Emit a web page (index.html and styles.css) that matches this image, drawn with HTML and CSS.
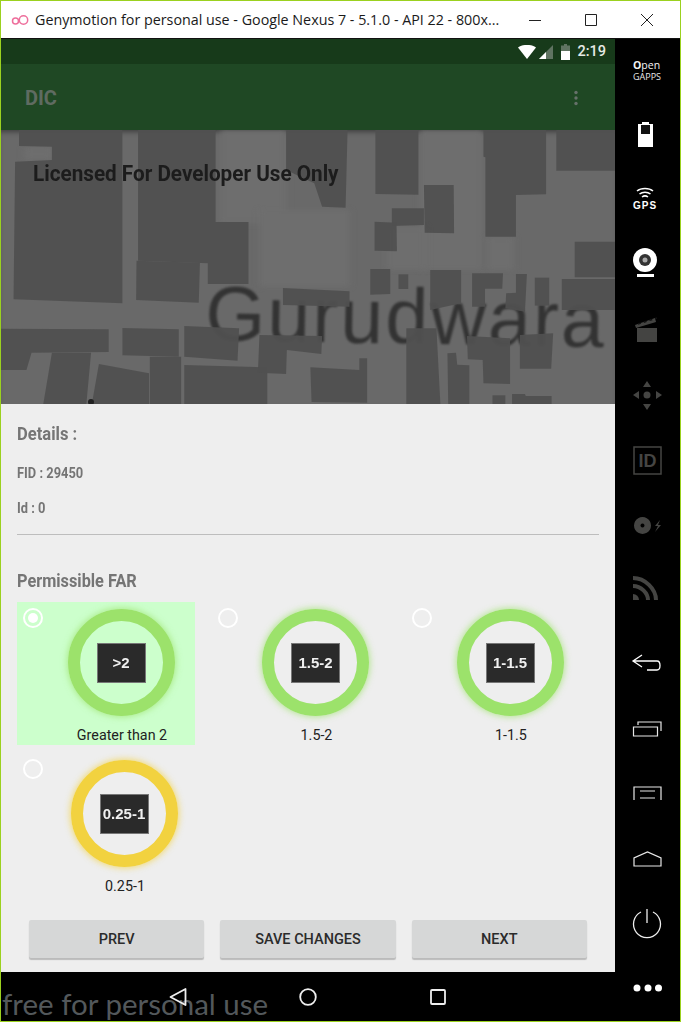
FILE: index.html
```html
<!DOCTYPE html>
<html lang="en">
<head>
  <meta charset="UTF-8">
  <title>Genymotion</title>
  <link rel="stylesheet" href="styles.css">
</head>
<body>
  <div class="window">
    <header class="titlebar">
      <svg class="app-logo" width="18" height="12" viewBox="0 0 18 12"><circle cx="4.5" cy="7" r="3" fill="none" stroke="#ee6f9c" stroke-width="1.5"/><circle cx="12.5" cy="6" r="4.2" fill="none" stroke="#ee6f9c" stroke-width="1.5"/></svg>
      <span class="title">Genymotion for personal use - Google Nexus 7 - 5.1.0 - API 22 - 800x...</span>
      <div class="win-controls">
        <svg width="14" height="14" viewBox="0 0 14 14"><path d="M1 7.5h12" stroke="#222" fill="none"/></svg>
        <svg width="14" height="14" viewBox="0 0 14 14"><path d="M1.5 1.5h11v11h-11z" stroke="#222" fill="none"/></svg>
        <svg width="14" height="14" viewBox="0 0 14 14"><path d="M1 1l12 12M13 1L1 13" stroke="#222" fill="none"/></svg>
      </div>
    </header>

    <div class="device">
      <main class="screen">
        <div class="statusbar">
          <svg width="18" height="14" viewBox="0 0 18 14"><path d="M0 2.5C5 -1 13 -1 18 2.5L9 14z" fill="#fff"/></svg>
          <svg width="14" height="14" viewBox="0 0 14 14"><path d="M14 0v14H0z" fill="#5f7361"/><path d="M7 7v7H0z" fill="#fff"/></svg>
          <svg class="status-batt" width="9" height="16" viewBox="0 0 9 16"><path d="M3 0h3v1.500h3V16H0V1.500h3z" fill="#5f7361"/><path d="M0 7h9v9H0z" fill="#fff"/></svg>
          <span class="clock">2:19</span>
        </div>
        <div class="toolbar">
          <span class="app-name">DIC</span>
          <svg width="6" height="16" viewBox="0 0 6 16"><circle cx="3" cy="2.500" r="1.700" fill="#66716a"/><circle cx="3" cy="8" r="1.700" fill="#66716a"/><circle cx="3" cy="13.500" r="1.700" fill="#66716a"/></svg>
        </div>

        <section class="map">
          <svg class="map-art" viewBox="0 0 614 274">
            <g class="map-light" transform="scale(0.3916 0.3333)">
              <rect x="560" y="0" width="170" height="280"/>
              <rect x="1070" y="0" width="160" height="420"/>
              <rect x="660" y="240" width="230" height="230"/>
              <rect x="60" y="50" width="70" height="40"/>
              <rect x="985" y="290" width="100" height="130"/>
              <rect x="1240" y="320" width="70" height="100"/>
            </g>
            <text class="map-label" x="204" y="210" transform="rotate(1 204 210)">Gurudwara</text>
            <g class="map-blocks" transform="scale(0.3916 0.3333)">
              <polygon points="46,0 310,0 310,520 32,508 36,95 130,90 130,50 46,48"/>
              <polygon points="350,0 548,0 548,276 632,276 632,462 528,462 528,400 350,392"/>
              <polygon points="346,392 508,398 505,518 345,510"/>
              <polygon points="728,0 885,0 880,233 820,230 800,160 728,120"/>
              <polygon points="956,0 1066,0 1066,194 956,192"/>
              <polygon points="1080,165 1156,165 1157,310 1082,308"/>
              <polygon points="998,235 1080,235 1080,285 998,288"/>
              <polygon points="954,275 1010,278 1011,364 954,362"/>
              <polygon points="1232,0 1392,0 1392,193 1315,195 1315,320 1237,320 1237,82 1232,80"/>
              <polygon points="1418,0 1568,0 1568,122 1418,122"/>
              <polygon points="1465,335 1568,335 1568,442 1465,442"/>
              <polygon points="1432,447 1568,447 1568,540 1432,540"/>
              <polygon points="943,417 994,417 994,492 943,494"/>
              <polygon points="1015,433 1040,433 1040,477 1015,477"/>
              <polygon points="1096,420 1175,420 1175,520 1096,540"/>
              <polygon points="1203,430 1282,430 1280,476 1236,476 1236,530 1203,530"/>
              <polygon points="1315,432 1343,432 1338,545 1288,535 1290,490 1315,488"/>
              <polygon points="1363,443 1400,443 1400,527 1363,527"/>
              <polygon points="720,474 890,484 890,530 720,525"/>
              <polygon points="0,596 275,598 275,666 78,668 65,720 0,720"/>
              <polygon points="130,668 230,668 218,822 108,822"/>
              <polygon points="310,594 454,598 454,680 310,676"/>
              <polygon points="468,588 608,595 604,692 468,680"/>
              <polygon points="380,680 460,680 460,822 380,822"/>
              <polygon points="250,702 378,730 378,822 232,822"/>
              <polygon points="468,705 680,712 680,822 468,822"/>
              <polygon points="660,615 820,618 818,672 730,660 728,732 656,728"/>
              <polygon points="790,712 915,720 915,685 935,685 935,818 793,816"/>
              <polygon points="1035,595 1112,595 1122,822 1035,822"/>
              <polygon points="1140,670 1162,668 1165,704 1196,706 1196,822 1142,822"/>
              <polygon points="1190,618 1300,625 1300,762 1232,760 1230,690 1192,688"/>
              <polygon points="1325,615 1410,610 1405,716 1325,716"/>
              <polygon points="1255,796 1288,796 1288,822 1255,822"/>
              <polygon points="1305,792 1338,792 1340,798 1406,798 1406,822 1305,822"/>
            </g>
            <circle cx="90" cy="272" r="3" fill="#222"/>
          </svg>
          <span class="license narrow">Licensed For Developer Use Only</span>
        </section>

        <section class="form">
          <h2 class="details-title"><span class="narrow">Details :</span></h2>
          <p class="detail"><span class="narrow">FID : 29450</span></p>
          <p class="detail"><span class="narrow">Id : 0</span></p>
          <hr class="divider">
          <h2 class="far-title"><span class="narrow">Permissible FAR</span></h2>

          <div class="options">
            <div class="option selected">
              <span class="radio checked"></span>
              <div class="option-body">
                <div class="ring green"><span class="badge">&gt;2</span></div>
                <span class="option-label">Greater than 2</span>
              </div>
            </div>
            <div class="option">
              <span class="radio"></span>
              <div class="option-body">
                <div class="ring green"><span class="badge">1.5-2</span></div>
                <span class="option-label">1.5-2</span>
              </div>
            </div>
            <div class="option">
              <span class="radio"></span>
              <div class="option-body">
                <div class="ring green"><span class="badge">1-1.5</span></div>
                <span class="option-label">1-1.5</span>
              </div>
            </div>
            <div class="option">
              <span class="radio"></span>
              <div class="option-body shifted">
                <div class="ring yellow"><span class="badge">0.25-1</span></div>
                <span class="option-label">0.25-1</span>
              </div>
            </div>
          </div>

          <div class="actions">
            <button class="btn" type="button">PREV</button>
            <button class="btn" type="button">SAVE CHANGES</button>
            <button class="btn" type="button">NEXT</button>
          </div>
        </section>

        <nav class="navbar">
          <span class="watermark">free for personal use</span>
          <div class="nav-key"><svg width="20" height="20" viewBox="0 0 20 20"><path d="M17.500 2v16L2.500 10z" fill="none" stroke="#eee" stroke-width="1.800" stroke-linejoin="round"/></svg></div>
          <div class="nav-key"><svg width="20" height="20" viewBox="0 0 20 20"><circle cx="10" cy="10" r="7.800" fill="none" stroke="#eee" stroke-width="1.800"/></svg></div>
          <div class="nav-key"><svg width="20" height="20" viewBox="0 0 20 20"><rect x="3" y="3" width="14" height="14" rx="1" fill="none" stroke="#eee" stroke-width="1.800"/></svg></div>
        </nav>
      </main>

      <aside class="sidebar">
        <svg class="side-art" viewBox="615 39 65 982" width="65" height="982">
          <text class="gapps-open" x="633" y="69"><tspan class="gapps-o">O</tspan>pen</text>
          <text class="gapps" x="633" y="79.500">GAPPS</text>

          <path d="M642 122h7v2h4v23h-15v-23h4z" fill="#fff"/>
          <rect x="641" y="125" width="9" height="9" fill="#111"/>

          <g fill="none" stroke="#fff" stroke-width="1.500">
            <path d="M637 191c4-3.500 12-3.500 16 0"/>
            <path d="M639.500 194c3-2.500 8-2.500 11 0"/>
            <path d="M642 197c2-1.500 4-1.500 6 0"/>
          </g>
          <text class="gps" x="645" y="208.500">GPS</text>

          <circle cx="645" cy="260" r="12" fill="#fff"/>
          <circle cx="645" cy="260" r="6" fill="#333"/>
          <circle cx="645" cy="260" r="2.500" fill="#aaa"/>
          <rect x="637" y="274" width="17" height="3" fill="#fff"/>

          <g fill="#444442">
            <rect x="637" y="328" width="20" height="14"/>
            <path d="M635 325l20-7 1 4-20 6z"/>
          </g>
          <path d="M638 324l19-6" stroke="#111" stroke-width="1.500" stroke-dasharray="3 3" fill="none"/>

          <g fill="#454543">
            <path d="M647 381l4 6h-8z"/>
            <path d="M647 410l4-6h-8z"/>
            <path d="M633 395l6-4v8z"/>
            <path d="M662 395l-6-4v8z"/>
            <circle cx="647" cy="395" r="3.500"/>
          </g>

          <rect x="634" y="447" width="27" height="27" fill="none" stroke="#454543" stroke-width="1.500"/>
          <text class="id-mark" x="647.500" y="467">ID</text>

          <path fill-rule="evenodd" fill="#454543" d="M642.500 517a8.500 8.500 0 1 0 .01 0zM642.500 523.500a2 2 0 1 1-.01 0z"/>
          <path d="M660 520l-5 6h3l-3 6 6-7h-3z" fill="#454543"/>

          <g fill="none" stroke="#454543" stroke-width="4">
            <path d="M633 578c12 0 23 11 23 22"/>
            <path d="M633 586c8 0 15 7 15 14"/>
          </g>
          <path d="M633 594a6 6 0 0 1 6 6h-6z" fill="#454543"/>

          <path d="M642 655l-9 6 9 6M633 661h24c4 0 4 9 0 9h-10" fill="none" stroke="#fff" stroke-width="1.300"/>

          <path d="M633.500 727h24v9h-24zM638 725v-3h23v9" fill="none" stroke="#e8e8e8" stroke-width="1.200"/>

          <path d="M634 800v-13h27v13M640 791h15M640 798h15" fill="none" stroke="#e8e8e8" stroke-width="1.200"/>

          <path d="M634 866v-8l13.500-6 13.500 6v8z" fill="none" stroke="#e8e8e8" stroke-width="1.200"/>

          <path d="M641 912a13.500 13.500 0 1 0 12 0M647 909v14" fill="none" stroke="#eee" stroke-width="1.300"/>

          <g fill="#fff">
            <circle cx="637" cy="988" r="3.500"/>
            <circle cx="648" cy="988" r="3.500"/>
            <circle cx="658.500" cy="988" r="3.500"/>
          </g>
        </svg>
      </aside>
    </div>
  </div>
</body>
</html>
```

FILE: styles.css
```css
* {
  box-sizing: border-box;
}

body {
  margin: 0;
  background-color: #000;
  font-family: Roboto, sans-serif;
}

.window {
  width: 681px;
  height: 1022px;
  display: flex;
  flex-direction: column;
  border: 1px solid #9bd11f;
  overflow: hidden;
}

.titlebar {
  height: 38px;
  flex: none;
  display: flex;
  align-items: center;
  background-color: #fff;
  border-bottom: 1px solid #111;
  padding-left: 10px;
}

.app-logo {
  margin-right: 6px;
}

.title {
  font-family: "Open Sans", sans-serif;
  font-size: 14.3px;
  color: #1a1a1a;
  white-space: nowrap;
}

.win-controls {
  margin-left: auto;
  display: flex;
  gap: 42px;
  padding-right: 26px;
}

.device {
  flex: 1;
  display: flex;
  min-height: 0;
}

.screen {
  width: 614px;
  display: flex;
  flex-direction: column;
  background-color: #eee;
  position: relative;
}

.statusbar {
  height: 25px;
  flex: none;
  display: flex;
  align-items: center;
  justify-content: flex-end;
  gap: 3px;
  padding-right: 9px;
  background-color: #173a1a;
}

.status-batt {
  margin-left: 5px;
}

.clock {
  margin-left: 4px;
  color: #e6ebe6;
  font-size: 14.5px;
  font-weight: 500;
}

.toolbar {
  height: 66px;
  flex: none;
  display: flex;
  align-items: center;
  justify-content: space-between;
  padding: 2px 36px 0 24px;
  background-color: #1f4824;
}

.app-name {
  color: #5f6b61;
  font-size: 20px;
  font-weight: 700;
}

.map {
  height: 274px;
  flex: none;
  position: relative;
  overflow: hidden;
  background-color: #696969;
  box-shadow: inset 0 5px 5px -3px rgba(0, 0, 0, 0.4);
}

.map-art {
  display: block;
  width: 100%;
  height: 100%;
}

.map-light rect {
  fill: #6e6e6e;
  filter: blur(8px);
}

.map-blocks polygon {
  fill: #505050;
  fill-opacity: 0.95;
}

.map-label {
  font-family: "Liberation Sans", sans-serif;
  font-size: 77px;
  letter-spacing: 2.2px;
  fill: #333;
  filter: blur(1.3px);
}

.license {
  position: absolute;
  left: 32px;
  top: 30px;
  font-size: 22.5px;
  font-weight: 700;
  color: #1c1c1c;
  transform: scaleX(0.93);
  filter: blur(0.4px);
}

.narrow {
  display: inline-block;
  transform: scaleX(0.92);
  transform-origin: left center;
  white-space: nowrap;
}

.form {
  flex: 1;
  padding: 19px 16px 0;
}

.details-title,
.far-title {
  margin: 0;
  font-size: 18px;
  line-height: 22px;
  font-weight: 700;
  color: #757575;
}

.far-title .narrow {
  transform: scaleX(0.905);
}

.detail {
  margin: 0;
  height: 35px;
  line-height: 35px;
  font-size: 14px;
  font-weight: 700;
  color: #757575;
}

.details-title {
  margin-bottom: 11px;
}

.divider {
  height: 1px;
  width: 582px;
  margin: 8px 0 0;
  border: 0;
  background-color: #bdbdbd;
}

.far-title {
  margin-top: 35px;
}

.options {
  margin-top: 10px;
  display: grid;
  grid-template-columns: repeat(3, 178px);
  column-gap: 16.5px;
  row-gap: 8px;
}

.option {
  height: 143px;
  display: flex;
  padding: 6px 2px 0 6px;
  gap: 8px;
}

.option.selected {
  background-color: #ccffcc;
}

.radio {
  flex: none;
  width: 20px;
  height: 20px;
  display: flex;
  align-items: center;
  justify-content: center;
  border: 2px solid #fff;
  border-radius: 50%;
}

.radio.checked::after {
  content: "";
  width: 10px;
  height: 10px;
  border-radius: 50%;
  background-color: #fff;
}

.option-body {
  flex: 1;
  display: flex;
  flex-direction: column;
  align-items: center;
  padding-top: 1px;
}

.option-body.shifted {
  margin-left: 6px;
}

.ring {
  width: 107px;
  height: 109px;
  margin-right: 2px;
  display: flex;
  align-items: center;
  justify-content: center;
  border-radius: 50%;
  border: 12px solid;
}

.ring.green {
  border-color: #9ce26b;
  box-shadow: 0 0 6px 1px rgba(156, 226, 107, 0.7);
}

.ring.yellow {
  border-color: #f2d23f;
  box-shadow: 0 0 6px 1px rgba(242, 210, 63, 0.7);
}

.badge {
  width: 49px;
  height: 40px;
  flex: none;
  display: flex;
  align-items: center;
  justify-content: center;
  background-color: #2a2a2a;
  border: 1px solid #777;
  color: #f0f0f0;
  font-family: "Liberation Sans", sans-serif;
  font-size: 15px;
  font-weight: 700;
  white-space: nowrap;
  filter: blur(0.4px);
}

.option-label {
  margin-top: 9px;
  font-size: 14.3px;
  line-height: 20px;
  color: #222;
}

.actions {
  margin-top: 24px;
  padding: 0 12px;
  display: flex;
  gap: 16px;
}

.btn {
  flex: 1;
  height: 38px;
  border: 0;
  border-radius: 2px;
  background-color: #d6d7d7;
  box-shadow: 0 2px 1px #bbb;
  color: #2b2b2b;
  font-family: Roboto, sans-serif;
  font-size: 14.5px;
  font-weight: 500;
}

.navbar {
  height: 49px;
  flex: none;
  display: flex;
  justify-content: center;
  align-items: center;
  background-color: #000;
  position: relative;
}

.nav-key {
  width: 130px;
  display: flex;
  justify-content: center;
  position: relative;
}

.watermark {
  position: absolute;
  left: 1px;
  bottom: 0;
  font-family: Lato, sans-serif;
  font-size: 29.5px;
  line-height: 34px;
  color: #53585b;
  white-space: nowrap;
}

.sidebar {
  flex: 1;
  background-color: #000;
}

.side-art {
  display: block;
}

.gapps-open {
  font-family: "Open Sans", sans-serif;
  font-size: 10.5px;
  fill: #f4f4f4;
}

.gapps-o {
  font-weight: 700;
}

.gapps {
  font-family: "Open Sans", sans-serif;
  font-size: 9px;
  fill: #e8e8e8;
}

.gps {
  font-family: "Liberation Sans", sans-serif;
  font-size: 10px;
  font-weight: 700;
  letter-spacing: 1px;
  fill: #fff;
  text-anchor: middle;
}

.id-mark {
  font-family: "Liberation Sans", sans-serif;
  font-size: 18px;
  font-weight: 700;
  fill: #454543;
  text-anchor: middle;
}
```
